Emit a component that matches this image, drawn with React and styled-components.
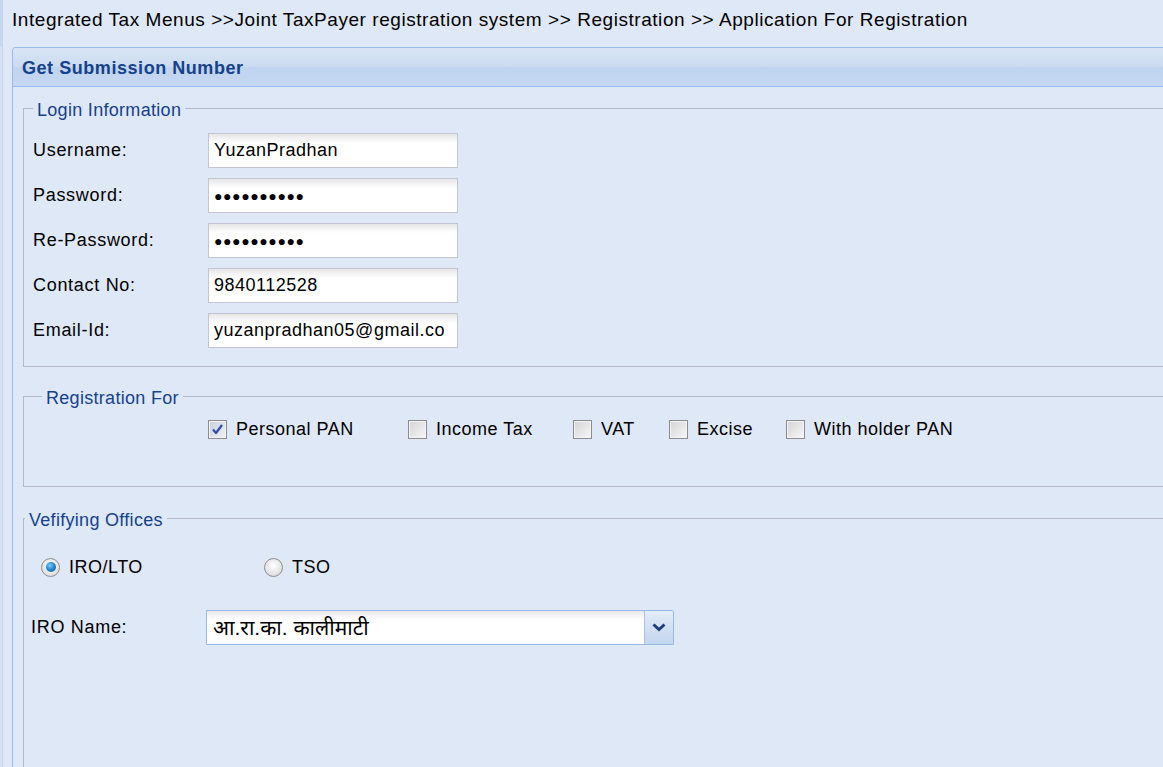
import React from 'react';
import styled, { createGlobalStyle } from 'styled-components';

const GlobalStyle = createGlobalStyle`
  html, body {
    margin: 0;
    padding: 0;
  }
  body {
    background: #dfe8f6;
    font-family: "Liberation Sans", Arial, "Noto Sans", "Noto Sans Devanagari", sans-serif;
    color: #000;
    overflow: hidden;
  }
`;

const Page = styled.div`
  display: flex;
  height: 767px;
  overflow: hidden;
`;

const SideStrip = styled.div`
  flex: 0 0 3px;
  box-sizing: border-box;
  border-right: 1px solid #c4d4ec;
  background: linear-gradient(to bottom, #c6d6ee 0, #c6d6ee 46px, #d6e2f3 46px);
`;

const Main = styled.div`
  flex: 1;
  min-width: 0;
  padding-left: 9px;
`;

const Breadcrumb = styled.div`
  height: 47px;
  box-sizing: border-box;
  padding-top: 9px;
  font-size: 19px;
  line-height: 21px;
  letter-spacing: 0.55px;
  white-space: nowrap;
`;

const Panel = styled.div`
  width: 1250px;
  height: 760px;
  border: 1px solid #99bbe8;
  border-bottom: none;
  border-top-left-radius: 4px;
  overflow: hidden;
`;

const PanelHeader = styled.div`
  height: 39px;
  box-sizing: border-box;
  border-bottom: 1px solid #99bbe8;
  background: linear-gradient(to bottom, #d9e5f5 0, #ccdbf1 48%, #c0d4ef 52%, #c6d8f1 100%);
  padding-left: 9px;
  font-size: 18px;
  font-weight: bold;
  letter-spacing: 0.55px;
  line-height: 41px;
  color: #15428b;
`;

const PanelBody = styled.div`
  padding: 9px 0 0 10px;
`;

const FieldSet = styled.fieldset`
  margin: ${(p) => p.$mt || 0}px 0 0 0;
  padding: ${(p) => p.$pt}px 0 ${(p) => p.$pb}px ${(p) => p.$pl}px;
  border: 1px solid #b5b8c8;
  min-width: 0;
`;

const Legend = styled.legend`
  padding: 4px 4px 0;
  margin-left: ${(p) => p.$offset || 0}px;
  font-size: 18px;
  line-height: 20px;
  letter-spacing: 0.3px;
  color: #15428b;
`;

const FormGrid = styled.div`
  display: grid;
  grid-template-columns: 175px ${(p) => p.$field || 250}px;
  row-gap: 10px;
  align-items: center;
`;

const Label = styled.div`
  font-size: 18px;
  letter-spacing: 0.7px;
`;

const TextBox = styled.input`
  height: 35px;
  box-sizing: border-box;
  width: 100%;
  margin: 0;
  padding: 0 13px 0 5px;
  border: 1px solid #c3c6d2;
  background: linear-gradient(to bottom, #e6e6e6 0, #ffffff 9px);
  font-family: inherit;
  font-size: ${(p) => (p.$masked ? '14px' : '18px')};
  letter-spacing: ${(p) => (p.$masked ? '0.6px' : '0.5px')};
  color: #000;
  outline: none;
`;

const CheckRow = styled.div`
  display: flex;
  align-items: center;
  padding-left: 175px;
  height: 22px;
`;

const OptionItem = styled.label`
  display: flex;
  align-items: center;
  gap: 9px;
  flex: 0 0 ${(p) => (p.$width ? `${p.$width}px` : 'auto')};
  font-size: 18px;
  letter-spacing: 0.5px;
  white-space: nowrap;
`;

const CheckBox = styled.span`
  width: 19px;
  height: 19px;
  box-sizing: border-box;
  border: 1px solid #8b8b8b;
  box-shadow: inset 0 0 0 1px #f4f4f4;
  background: ${(p) =>
    p.$checked
      ? 'linear-gradient(135deg, #c9cfdc, #eef1f7)'
      : 'linear-gradient(135deg, #d4d4d4, #f7f7f7)'};
  display: flex;
  align-items: center;
  justify-content: center;
`;

const RadioRow = styled.div`
  display: flex;
  align-items: center;
  height: 22px;
  padding-left: 10px;
  margin-bottom: 32px;
`;

const RadioDot = styled.span`
  width: 19px;
  height: 19px;
  box-sizing: border-box;
  border-radius: 50%;
  border: 1px solid #8e8e8e;
  background: radial-gradient(circle at 50% 40%, #ffffff, #d2d2d2);
  display: flex;
  align-items: center;
  justify-content: center;

  &::after {
    content: '';
    display: ${(p) => (p.$checked ? 'block' : 'none')};
    width: 10px;
    height: 10px;
    border-radius: 50%;
    background: radial-gradient(circle at 40% 35%, #7fd0ff 0, #2a8ad0 45%, #0b4f86 100%);
  }
`;

const Select = styled.div`
  display: flex;
  height: 35px;
  box-sizing: border-box;
  border: 1px solid #98b9e3;
  border-top-right-radius: 2px;
  background: linear-gradient(to bottom, #e8e8e8 0, #ffffff 9px);
`;

const SelectValue = styled.div`
  flex: 1;
  padding-left: 6px;
  font-size: 21px;
  line-height: 33px;
  white-space: nowrap;
`;

const Trigger = styled.div`
  flex: 0 0 28px;
  border-left: 1px solid #a9c3e6;
  background: linear-gradient(to bottom, #e4edf8 0, #d2e0f2 50%, #c3d6ee 100%);
  display: flex;
  align-items: center;
  justify-content: center;
`;

const loginRows = [
  ['Username:', 'YuzanPradhan'],
  ['Password:', '●●●●●●●●●●', true],
  ['Re-Password:', '●●●●●●●●●●', true],
  ['Contact No:', '9840112528'],
  ['Email-Id:', 'yuzanpradhan05@gmail.com'],
];

const registrations = [
  { name: 'Personal PAN', width: 200, checked: true },
  { name: 'Income Tax', width: 165 },
  { name: 'VAT', width: 96 },
  { name: 'Excise', width: 117 },
  { name: 'With holder PAN' },
];

function CheckMark() {
  return (
    <svg width="13" height="13" viewBox="0 0 13 13">
      <path d="M2 6.5 L5 10 L11 2" fill="none" stroke="#2f4fa8" strokeWidth="2.2" strokeLinejoin="round" />
    </svg>
  );
}

function Chevron() {
  return (
    <svg width="14" height="9" viewBox="0 0 14 9">
      <path d="M1.5 1.5 L7 6.5 L12.5 1.5" fill="none" stroke="#1f3d78" strokeWidth="3" />
    </svg>
  );
}

export default function App() {
  return (
    <>
      <GlobalStyle />
      <Page>
        <SideStrip />
        <Main>
          <Breadcrumb>
            Integrated Tax Menus &gt;&gt;Joint TaxPayer registration system &gt;&gt; Registration &gt;&gt; Application For Registration
          </Breadcrumb>
          <Panel>
            <PanelHeader>Get Submission Number</PanelHeader>
            <PanelBody>
              <FieldSet $pt={13} $pb={18} $pl={9}>
                <Legend>Login Information</Legend>
                <FormGrid>
                  {loginRows.map(([label, value, masked]) => (
                    <React.Fragment key={label}>
                      <Label>{label}</Label>
                      <TextBox readOnly value={value} $masked={masked} />
                    </React.Fragment>
                  ))}
                </FormGrid>
              </FieldSet>

              <FieldSet $mt={17} $pt={10} $pb={46} $pl={9}>
                <Legend $offset={9}>Registration For</Legend>
                <CheckRow>
                  {registrations.map((r) => (
                    <OptionItem key={r.name} $width={r.width}>
                      <CheckBox $checked={r.checked}>{r.checked && <CheckMark />}</CheckBox>
                      {r.name}
                    </OptionItem>
                  ))}
                </CheckRow>
              </FieldSet>

              <FieldSet $mt={19} $pt={26} $pb={300} $pl={7}>
                <Legend $offset={-6}>Vefifying Offices</Legend>
                <RadioRow>
                  <OptionItem $width={223}>
                    <RadioDot $checked />
                    IRO/LTO
                  </OptionItem>
                  <OptionItem>
                    <RadioDot />
                    TSO
                  </OptionItem>
                </RadioRow>
                <FormGrid $field={468}>
                  <Label>IRO Name:</Label>
                  <Select>
                    <SelectValue>आ.रा.का. कालीमाटी</SelectValue>
                    <Trigger>
                      <Chevron />
                    </Trigger>
                  </Select>
                </FormGrid>
              </FieldSet>
            </PanelBody>
          </Panel>
        </Main>
      </Page>
    </>
  );
}
